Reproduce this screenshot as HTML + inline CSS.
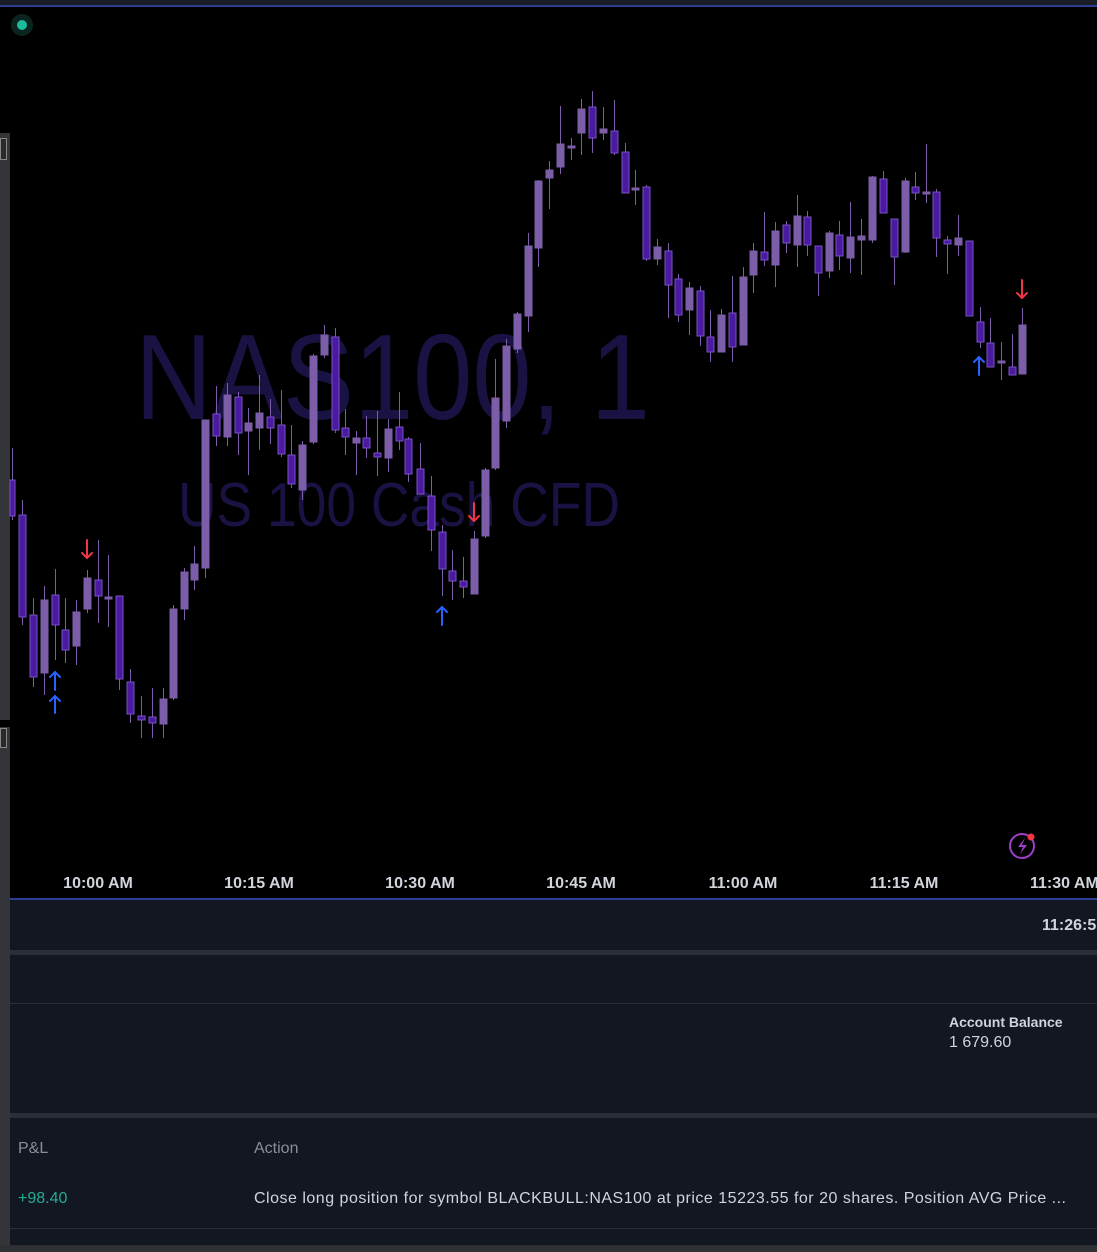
<!DOCTYPE html>
<html><head><meta charset="utf-8"><style>
html,body{margin:0;padding:0;background:#000;}
body{width:1097px;height:1252px;position:relative;overflow:hidden;font-family:"Liberation Sans","DejaVu Sans",sans-serif;}
.abs{position:absolute;}
.u{fill:#7b5ea7;stroke:#7b5ea7;stroke-width:1}
.d{fill:#4a1aa0;stroke:#7a52c4;stroke-width:1}
.w{stroke:#7b5ea7;stroke-width:1}
.ax{fill:#d1d4dc;font-size:16px;font-weight:bold;font-family:"Liberation Sans",sans-serif}
</style></head><body>
<div class="abs" style="left:0;top:0;width:1097px;height:5px;background:#1a1c26"></div>
<div class="abs" style="left:0;top:5px;width:1097px;height:2px;background:#2c3e94"></div>
<div class="abs" style="left:0;top:133px;width:10px;height:587px;background:#343538"></div>
<div class="abs" style="left:0;top:138px;width:7px;height:22px;border:1px solid #888;box-sizing:border-box;background:#2a2a2a"></div>
<div class="abs" style="left:0;top:727px;width:10px;height:525px;background:#343538"></div>
<div class="abs" style="left:0;top:728px;width:7px;height:20px;border:1px solid #888;box-sizing:border-box;background:#2a2a2a"></div>
<div class="abs" style="left:11px;top:14px;width:22px;height:22px;border-radius:50%;background:#0b2420"></div>
<div class="abs" style="left:17px;top:20px;width:10px;height:10px;border-radius:50%;background:#1abc9c"></div>
<svg class="abs" style="left:0;top:0" width="1097" height="898" viewBox="0 0 1097 898">
<text x="135" y="419" font-size="122" fill="#1a1242" textLength="515" lengthAdjust="spacingAndGlyphs" font-family="Liberation Sans">NAS100, 1</text>
<text x="178" y="526" font-size="62" fill="#1a1242" textLength="442" lengthAdjust="spacingAndGlyphs" font-family="Liberation Sans">US 100 Cash CFD</text>
<g>
<line class="w" x1="12.5" x2="12.5" y1="448" y2="520"/><rect class="d" x="10" y="480" width="5" height="36"/>
<line class="w" x1="22.5" x2="22.5" y1="500" y2="625"/><rect class="d" x="19" y="515" width="7" height="102"/>
<line class="w" x1="33.5" x2="33.5" y1="598" y2="687"/><rect class="d" x="30" y="615" width="7" height="62"/>
<line class="w" x1="44.5" x2="44.5" y1="586" y2="695"/><rect class="u" x="41" y="600" width="7" height="73"/>
<line class="w" x1="55.5" x2="55.5" y1="569" y2="660"/><rect class="d" x="52" y="595" width="7" height="30"/>
<line class="w" x1="65.5" x2="65.5" y1="598" y2="663"/><rect class="d" x="62" y="630" width="7" height="20"/>
<line class="w" x1="76.5" x2="76.5" y1="600" y2="665"/><rect class="u" x="73" y="612" width="7" height="34"/>
<line class="w" x1="87.5" x2="87.5" y1="570" y2="613"/><rect class="u" x="84" y="578" width="7" height="31"/>
<line class="w" x1="98.5" x2="98.5" y1="540" y2="623"/><rect class="d" x="95" y="580" width="7" height="16"/>
<line class="w" x1="108.5" x2="108.5" y1="555" y2="627"/><rect class="u" x="105" y="597" width="7" height="2"/>
<line class="w" x1="119.5" x2="119.5" y1="596" y2="690"/><rect class="d" x="116" y="596" width="7" height="83"/>
<line class="w" x1="130.5" x2="130.5" y1="669" y2="723"/><rect class="d" x="127" y="682" width="7" height="32"/>
<line class="w" x1="141.5" x2="141.5" y1="696" y2="738"/><rect class="d" x="138" y="716" width="7" height="4"/>
<line class="w" x1="152.5" x2="152.5" y1="688" y2="738"/><rect class="d" x="149" y="717" width="7" height="6"/>
<line class="w" x1="163.5" x2="163.5" y1="688" y2="738"/><rect class="u" x="160" y="699" width="7" height="25"/>
<line class="w" x1="173.5" x2="173.5" y1="605" y2="700"/><rect class="u" x="170" y="609" width="7" height="89"/>
<line class="w" x1="184.5" x2="184.5" y1="568" y2="620"/><rect class="u" x="181" y="572" width="7" height="37"/>
<line class="w" x1="194.5" x2="194.5" y1="546" y2="590"/><rect class="u" x="191" y="564" width="7" height="16"/>
<line class="w" x1="205.5" x2="205.5" y1="420" y2="578"/><rect class="u" x="202" y="420" width="7" height="148"/>
<line class="w" x1="216.5" x2="216.5" y1="386" y2="446"/><rect class="d" x="213" y="414" width="7" height="22"/>
<line class="w" x1="227.5" x2="227.5" y1="383" y2="446"/><rect class="u" x="224" y="395" width="7" height="42"/>
<line class="w" x1="238.5" x2="238.5" y1="392" y2="455"/><rect class="d" x="235" y="397" width="7" height="36"/>
<line class="w" x1="248.5" x2="248.5" y1="408" y2="475"/><rect class="u" x="245" y="423" width="7" height="8"/>
<line class="w" x1="259.5" x2="259.5" y1="375" y2="450"/><rect class="u" x="256" y="413" width="7" height="15"/>
<line class="w" x1="270.5" x2="270.5" y1="399" y2="444"/><rect class="d" x="267" y="417" width="7" height="11"/>
<line class="w" x1="281.5" x2="281.5" y1="390" y2="457"/><rect class="d" x="278" y="425" width="7" height="29"/>
<line class="w" x1="291.5" x2="291.5" y1="425" y2="488"/><rect class="d" x="288" y="455" width="7" height="29"/>
<line class="w" x1="302.5" x2="302.5" y1="441" y2="500"/><rect class="u" x="299" y="445" width="7" height="45"/>
<line class="w" x1="313.5" x2="313.5" y1="354" y2="444"/><rect class="u" x="310" y="356" width="7" height="86"/>
<line class="w" x1="324.5" x2="324.5" y1="325" y2="358"/><rect class="u" x="321" y="335" width="7" height="20"/>
<line class="w" x1="335.5" x2="335.5" y1="328" y2="433"/><rect class="d" x="332" y="337" width="7" height="93"/>
<line class="w" x1="345.5" x2="345.5" y1="409" y2="455"/><rect class="d" x="342" y="428" width="7" height="9"/>
<line class="w" x1="356.5" x2="356.5" y1="431" y2="475"/><rect class="u" x="353" y="438" width="7" height="5"/>
<line class="w" x1="366.5" x2="366.5" y1="416" y2="458"/><rect class="d" x="363" y="438" width="7" height="10"/>
<line class="w" x1="377.5" x2="377.5" y1="411" y2="476"/><rect class="d" x="374" y="453" width="7" height="4"/>
<line class="w" x1="388.5" x2="388.5" y1="419" y2="472"/><rect class="u" x="385" y="429" width="7" height="29"/>
<line class="w" x1="399.5" x2="399.5" y1="392" y2="450"/><rect class="d" x="396" y="427" width="7" height="14"/>
<line class="w" x1="408.5" x2="408.5" y1="437" y2="482"/><rect class="d" x="405" y="439" width="7" height="35"/>
<line class="w" x1="420.5" x2="420.5" y1="443" y2="494"/><rect class="d" x="417" y="469" width="7" height="25"/>
<line class="w" x1="431.5" x2="431.5" y1="476" y2="551"/><rect class="d" x="428" y="496" width="7" height="34"/>
<line class="w" x1="442.5" x2="442.5" y1="525" y2="596"/><rect class="d" x="439" y="532" width="7" height="37"/>
<line class="w" x1="452.5" x2="452.5" y1="550" y2="600"/><rect class="d" x="449" y="571" width="7" height="10"/>
<line class="w" x1="463.5" x2="463.5" y1="557" y2="598"/><rect class="d" x="460" y="581" width="7" height="6"/>
<line class="w" x1="474.5" x2="474.5" y1="531" y2="594"/><rect class="u" x="471" y="539" width="7" height="55"/>
<line class="w" x1="485.5" x2="485.5" y1="468" y2="538"/><rect class="u" x="482" y="470" width="7" height="66"/>
<line class="w" x1="495.5" x2="495.5" y1="359" y2="470"/><rect class="u" x="492" y="398" width="7" height="70"/>
<line class="w" x1="506.5" x2="506.5" y1="339" y2="428"/><rect class="u" x="503" y="346" width="7" height="75"/>
<line class="w" x1="517.5" x2="517.5" y1="312" y2="353"/><rect class="u" x="514" y="314" width="7" height="35"/>
<line class="w" x1="528.5" x2="528.5" y1="233" y2="332"/><rect class="u" x="525" y="246" width="7" height="70"/>
<line class="w" x1="538.5" x2="538.5" y1="180" y2="267"/><rect class="u" x="535" y="181" width="7" height="67"/>
<line class="w" x1="549.5" x2="549.5" y1="161" y2="209"/><rect class="u" x="546" y="170" width="7" height="8"/>
<line class="w" x1="560.5" x2="560.5" y1="106" y2="174"/><rect class="u" x="557" y="144" width="7" height="23"/>
<line class="w" x1="571.5" x2="571.5" y1="138" y2="160"/><rect class="u" x="568" y="146" width="7" height="2"/>
<line class="w" x1="581.5" x2="581.5" y1="99" y2="155"/><rect class="u" x="578" y="109" width="7" height="24"/>
<line class="w" x1="592.5" x2="592.5" y1="91" y2="153"/><rect class="d" x="589" y="107" width="7" height="31"/>
<line class="w" x1="603.5" x2="603.5" y1="107" y2="140"/><rect class="u" x="600" y="129" width="7" height="4"/>
<line class="w" x1="614.5" x2="614.5" y1="100" y2="155"/><rect class="d" x="611" y="131" width="7" height="22"/>
<line class="w" x1="625.5" x2="625.5" y1="143" y2="193"/><rect class="d" x="622" y="152" width="7" height="41"/>
<line class="w" x1="635.5" x2="635.5" y1="170" y2="205"/><rect class="u" x="632" y="188" width="7" height="2"/>
<line class="w" x1="646.5" x2="646.5" y1="185" y2="261"/><rect class="d" x="643" y="187" width="7" height="72"/>
<line class="w" x1="657.5" x2="657.5" y1="239" y2="265"/><rect class="u" x="654" y="247" width="7" height="12"/>
<line class="w" x1="668.5" x2="668.5" y1="243" y2="318"/><rect class="d" x="665" y="251" width="7" height="34"/>
<line class="w" x1="678.5" x2="678.5" y1="274" y2="322"/><rect class="d" x="675" y="279" width="7" height="36"/>
<line class="w" x1="689.5" x2="689.5" y1="282" y2="335"/><rect class="u" x="686" y="288" width="7" height="22"/>
<line class="w" x1="700.5" x2="700.5" y1="286" y2="346"/><rect class="d" x="697" y="291" width="7" height="45"/>
<line class="w" x1="710.5" x2="710.5" y1="310" y2="362"/><rect class="d" x="707" y="337" width="7" height="15"/>
<line class="w" x1="721.5" x2="721.5" y1="309" y2="352"/><rect class="u" x="718" y="315" width="7" height="37"/>
<line class="w" x1="732.5" x2="732.5" y1="276" y2="362"/><rect class="d" x="729" y="313" width="7" height="34"/>
<line class="w" x1="743.5" x2="743.5" y1="267" y2="345"/><rect class="u" x="740" y="277" width="7" height="68"/>
<line class="w" x1="753.5" x2="753.5" y1="243" y2="293"/><rect class="u" x="750" y="251" width="7" height="24"/>
<line class="w" x1="764.5" x2="764.5" y1="212" y2="266"/><rect class="d" x="761" y="252" width="7" height="8"/>
<line class="w" x1="775.5" x2="775.5" y1="222" y2="287"/><rect class="u" x="772" y="231" width="7" height="34"/>
<line class="w" x1="786.5" x2="786.5" y1="221" y2="253"/><rect class="d" x="783" y="225" width="7" height="18"/>
<line class="w" x1="797.5" x2="797.5" y1="195" y2="267"/><rect class="u" x="794" y="216" width="7" height="29"/>
<line class="w" x1="807.5" x2="807.5" y1="211" y2="256"/><rect class="d" x="804" y="217" width="7" height="28"/>
<line class="w" x1="818.5" x2="818.5" y1="246" y2="296"/><rect class="d" x="815" y="246" width="7" height="27"/>
<line class="w" x1="829.5" x2="829.5" y1="231" y2="278"/><rect class="u" x="826" y="233" width="7" height="38"/>
<line class="w" x1="839.5" x2="839.5" y1="221" y2="270"/><rect class="d" x="836" y="235" width="7" height="21"/>
<line class="w" x1="850.5" x2="850.5" y1="202" y2="273"/><rect class="u" x="847" y="237" width="7" height="21"/>
<line class="w" x1="861.5" x2="861.5" y1="219" y2="275"/><rect class="u" x="858" y="236" width="7" height="4"/>
<line class="w" x1="872.5" x2="872.5" y1="176" y2="243"/><rect class="u" x="869" y="177" width="7" height="63"/>
<line class="w" x1="883.5" x2="883.5" y1="171" y2="213"/><rect class="d" x="880" y="179" width="7" height="34"/>
<line class="w" x1="894.5" x2="894.5" y1="219" y2="285"/><rect class="d" x="891" y="219" width="7" height="38"/>
<line class="w" x1="905.5" x2="905.5" y1="178" y2="253"/><rect class="u" x="902" y="181" width="7" height="71"/>
<line class="w" x1="915.5" x2="915.5" y1="172" y2="200"/><rect class="d" x="912" y="187" width="7" height="6"/>
<line class="w" x1="926.5" x2="926.5" y1="144" y2="203"/><rect class="u" x="923" y="192" width="7" height="2"/>
<line class="w" x1="936.5" x2="936.5" y1="189" y2="257"/><rect class="d" x="933" y="192" width="7" height="46"/>
<line class="w" x1="947.5" x2="947.5" y1="236" y2="274"/><rect class="d" x="944" y="240" width="7" height="4"/>
<line class="w" x1="958.5" x2="958.5" y1="215" y2="256"/><rect class="u" x="955" y="238" width="7" height="7"/>
<line class="w" x1="969.5" x2="969.5" y1="241" y2="316"/><rect class="d" x="966" y="241" width="7" height="75"/>
<line class="w" x1="980.5" x2="980.5" y1="307" y2="348"/><rect class="d" x="977" y="322" width="7" height="20"/>
<line class="w" x1="990.5" x2="990.5" y1="318" y2="367"/><rect class="d" x="987" y="343" width="7" height="24"/>
<line class="w" x1="1001.5" x2="1001.5" y1="342" y2="380"/><rect class="u" x="998" y="361" width="7" height="2"/>
<line class="w" x1="1012.5" x2="1012.5" y1="334" y2="375"/><rect class="d" x="1009" y="367" width="7" height="8"/>
<line class="w" x1="1022.5" x2="1022.5" y1="308" y2="374"/><rect class="u" x="1019" y="325" width="7" height="49"/>
</g>
<g stroke-width="2" fill="none" stroke-linecap="round">
<g stroke="#2962ff"><path d="M55 690V672M50 677l5-5 5 5"/><path d="M55 713V696M50 701l5-5 5 5"/><path d="M442 625V607M437 612l5-5 5 5"/><path d="M979 375V357M974 362l5-5 5 5"/></g>
<g stroke="#f23645"><path d="M87 540V558M82 553l5 5 5-5"/><path d="M474 503V521M469 516l5 5 5-5"/><path d="M1022 280V298M1017 293l5 5 5-5"/></g>
</g>
<circle cx="1022" cy="846" r="12" fill="none" stroke="#9c3fc6" stroke-width="2"/>
<path d="M1025 838l-7 9h5l-3 7 7-9h-5z" fill="#9c3fc6"/>
<circle cx="1031" cy="837" r="3.5" fill="#f23645"/>
<text class="ax" x="98" y="888" text-anchor="middle">10:00 AM</text>
<text class="ax" x="259" y="888" text-anchor="middle">10:15 AM</text>
<text class="ax" x="420" y="888" text-anchor="middle">10:30 AM</text>
<text class="ax" x="581" y="888" text-anchor="middle">10:45 AM</text>
<text class="ax" x="743" y="888" text-anchor="middle">11:00 AM</text>
<text class="ax" x="904" y="888" text-anchor="middle">11:15 AM</text>
<text class="ax" x="1030" y="888">11:30 AM</text>
</svg>
<div class="abs" style="left:10px;top:898px;width:1087px;height:2px;background:#2c3e94"></div>
<div class="abs" style="left:10px;top:900px;width:1087px;height:50px;background:#131722"></div>
<div class="abs" style="left:1042px;top:917px;color:#d1d4dc;font-size:16px;font-weight:bold;white-space:nowrap">11:26:57</div>
<div class="abs" style="left:10px;top:950px;width:1087px;height:5px;background:#2a2e39"></div>
<div class="abs" style="left:10px;top:955px;width:1087px;height:158px;background:#131722"></div>
<div class="abs" style="left:10px;top:1003px;width:1087px;height:1px;background:#2a2e39"></div>
<div class="abs" style="left:949px;top:1014px;color:#d1d4dc;font-size:14px;font-weight:bold;white-space:nowrap">Account Balance</div>
<div class="abs" style="left:949px;top:1034px;color:#d1d4dc;font-size:16px;white-space:nowrap">1 679.60</div>
<div class="abs" style="left:10px;top:1113px;width:1087px;height:5px;background:#2a2e39"></div>
<div class="abs" style="left:10px;top:1118px;width:1087px;height:127px;background:#131722"></div>
<div class="abs" style="left:18px;top:1140px;color:#8b8f99;font-size:16px">P&amp;L</div>
<div class="abs" style="left:254px;top:1140px;color:#8b8f99;font-size:16px">Action</div>
<div class="abs" style="left:18px;top:1190px;color:#22ab94;font-size:16px">+98.40</div>
<div class="abs" style="left:254px;top:1190px;color:#d1d4dc;font-size:16px;white-space:nowrap;letter-spacing:0.5px">Close long position for symbol BLACKBULL:NAS100 at price 15223.55 for 20 shares. Position AVG Price ...</div>
<div class="abs" style="left:10px;top:1228px;width:1087px;height:1px;background:#2a2e39"></div>
<div class="abs" style="left:0;top:1245px;width:1097px;height:7px;background:#2f3033"></div>
</body></html>
